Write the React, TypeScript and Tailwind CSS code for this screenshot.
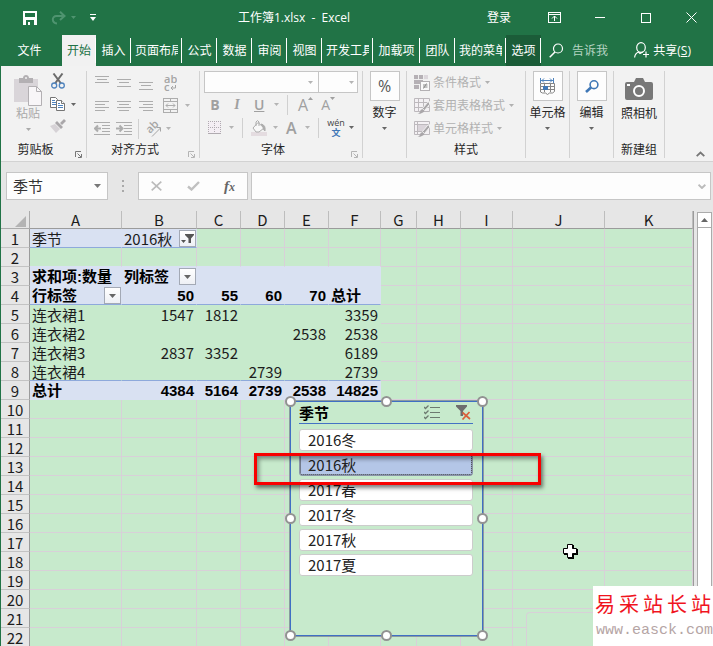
import React from "react";
import clsx from "clsx";

type IconProps = { className?: string };

const Caret = ({ className = "text-[#b4b4b4]" }: IconProps) => (
  <svg width="5" height="3" viewBox="0 0 5 3" className={clsx("shrink-0", className)}>
    <path d="M0 0h5L2.500 3z" fill="currentColor" />
  </svg>
);

const Divider = () => <span className="h-5 w-px bg-[#d0d0d0]" />;

const SaveIcon = () => (
  <svg width="14" height="14" viewBox="0 0 14 14" shapeRendering="crispEdges">
    <path d="M0 0h14v14H0z M2 2v4h10V2z M3 9v5h2v-3h2v3h4V9z" fill="#fff" fillRule="evenodd" />
  </svg>
);

const RedoIcon = () => (
  <svg width="15" height="14" viewBox="0 0 15 14" fill="none" stroke="#4f9470" strokeWidth="2">
    <path d="M13 5H5.500C.5 5 .5 12 6 12.500" />
    <path d="M9 .8 13.500 5 9 9" />
  </svg>
);

const CustomizeIcon = () => (
  <svg width="6" height="7" viewBox="0 0 6 7" fill="#fff">
    <path d="M0 0h6v1H0zM0 3h6L3 7z" />
  </svg>
);

const DisplayIcon = () => (
  <svg width="13" height="11" viewBox="0 0 13 11" fill="none" stroke="#fff" shapeRendering="crispEdges">
    <path d="M.5.5h12v10H.5zM1 2h11M6.500 4v5" />
    <path d="M4 6.500 6.500 4 9 6.500" shapeRendering="auto" />
  </svg>
);

const PasteIcon = () => (
  <svg width="28" height="31" viewBox="0 0 28 31">
    <path d="M0 4h24v23H0z" fill="#d9d5d9" />
    <path d="M5 3h4c0-4 6-4 6 0h4v5H5z" fill="#b3b0b3" />
    <circle cx="12" cy="3" r="1" fill="#f2f2f2" />
    <path d="M14.500 11.500h8l5 5v14h-13z" fill="#f8f6f8" stroke="#b3b0b3" />
    <path d="M22.500 11.500v5h5" fill="none" stroke="#b3b0b3" />
  </svg>
);

const CutIcon = () => (
  <svg width="14" height="16" viewBox="0 0 14 16" fill="none">
    <path d="M2.500.5 10 10.500M11.500.5 4 10.500" stroke="#6b6b6b" strokeWidth="2" />
    <circle cx="3.200" cy="12.500" r="2.500" stroke="#4f83bd" strokeWidth="1.300" />
    <circle cx="10.800" cy="12.500" r="2.500" stroke="#4f83bd" strokeWidth="1.300" />
  </svg>
);

const CopyIcon = () => (
  <svg width="15" height="14" viewBox="0 0 15 14" fill="#fff" stroke="#757575">
    <path d="M.5.500h5l2 2v8h-7z" />
    <path d="M2 3.500h3M2 5.500h4M2 7.500h4" stroke="#4f83bd" />
    <path d="M6.500 3.500h5l3 3v7h-8z" />
    <path d="M11.500 3.500v3h3" />
    <path d="M8 6.500h2M8 8.500h5M8 10.500h5" stroke="#4f83bd" />
  </svg>
);

const BrushIcon = () => (
  <svg width="16" height="14" viewBox="0 0 16 14">
    <path d="M0 7l5-2 5 5-4 4z" fill="#d6d2d6" />
    <path d="M5 4l2-2 6 6-2 2zM10 4l4-4 2 2-4 4z" fill="#aaa7aa" />
  </svg>
);

const AlignIcon = ({ d }: { d: string }) => (
  <svg width="14" height="14" viewBox="0 0 14 14" stroke="#adadad" shapeRendering="crispEdges">
    <path d={d} />
  </svg>
);

const WrapIcon = () => (
  <svg width="14" height="18" viewBox="0 0 14 18" fill="none" stroke="#a5a5a5">
    <text x="1" y="9" fontSize="11" fontWeight="600" fill="#a5a5a5" stroke="none">ab</text>
    <text x="1" y="17" fontSize="11" fontWeight="600" fill="#a5a5a5" stroke="none">c</text>
    <path d="M12.500 11v3H8M10 12l-2 2 2 2" />
  </svg>
);

const MergeIcon = () => (
  <svg width="15" height="15" viewBox="0 0 15 15" fill="none" stroke="#adadad" shapeRendering="crispEdges">
    <path d="M.5.500h14v14H.5zM0 3.500h15M0 11.500h15M7.500 0v3M7.500 12v3M3 7.500h9" />
    <path d="M5 5.500 3 7.500l2 2M10 5.500l2 2-2 2" shapeRendering="auto" />
  </svg>
);

const IndentIcon = ({ flip }: { flip?: boolean }) => (
  <svg width="16" height="13" viewBox="0 0 16 13" fill="none" stroke="#adadad">
    <path d="M0 .5h16M8 3.500h8M8 6.500h8M8 9.500h8M0 12.500h16" />
    <path d={flip ? "M0 6.500h6M3.500 3.500l3 3-3 3" : "M1 6.500h6M4 3.500l-3 3 3 3"} strokeWidth="2" />
  </svg>
);

const RotateIcon = () => (
  <svg width="17" height="16" viewBox="0 0 17 16" fill="none" stroke="#a5a5a5">
    <text x="0" y="0" fontSize="11" fontWeight="600" fill="#a5a5a5" stroke="none" transform="translate(5 13) rotate(-45)">ab</text>
    <path d="M7 15.500 15.500 7M11.500 6.500h4v4" />
  </svg>
);

const BorderIcon = () => (
  <svg width="13" height="13" viewBox="0 0 13 13" fill="none" stroke="#b0abb0" shapeRendering="crispEdges">
    <path d="M0 0h13v13H0z" fill="#f4eef4" stroke="none" />
    <path d="M.5 0v12M6.500 0v12M12.500 0v12M0 .5h13M0 6.500h13" strokeDasharray="1 1" />
    <path d="M0 12.500h13" />
  </svg>
);

const BucketIcon = () => (
  <svg width="16" height="16" viewBox="0 0 16 16" fill="none" stroke="#adadad">
    <path d="M0 12h16v4H0z" fill="#e4dce0" stroke="none" />
    <path d="M7 2.500 13 8l-5 4H5L2 8z" fill="#f8f8f8" />
    <path d="M5 6V2q1.500-3 3 0v4" />
    <path d="M10 4q5 1 4 7-2-1-2-4z" fill="#adadad" />
  </svg>
);

const ConditionalIcon = () => (
  <svg width="16" height="16" viewBox="0 0 16 16" fill="none" stroke="#b3b0b3" shapeRendering="crispEdges">
    <path d="M0 0h14v5H0zM0 5h9v4H0zM0 9h5v5H0z" fill="#b5b0b5" stroke="none" />
    <path d="M9 0h5v5H9z" fill="#dcd7dc" stroke="none" />
    <path d="M0 4.500h14M0 9.500h5M4.500 0v5M9.500 0v5" stroke="#eee" />
    <path d="M6.500 6.500h9v9h-9z" fill="#faf9fa" />
    <path d="M9 10h4.500M9 12h4.500M12.500 8.500l-3 5" stroke="#8c8c8c" shapeRendering="auto" />
  </svg>
);

const TableStyleIcon = ({ plain }: { plain?: boolean }) => (
  <svg width="16" height="16" viewBox="0 0 16 16" fill="none" stroke="#bdb9bd">
    <path d="M.5.500h15v13H.5z" fill="#f4f1f4" />
    {plain ? <path d="M4 4h9v6H4z" fill="#dad4da" stroke="none" /> : null}
    <path d={plain ? "M0 3.500h16M3.500 0v14M0 10.500h9" : "M0 4.500h16M0 9.500h16M4.500 0v14M9.500 0v14"} />
    <path d="M15.500 3.500v3l-5 6-2-2 5-6z" fill="#a9a6a9" stroke="#f2f2f2" />
    <path d="M8.500 11l2 2q-2 3-7 2.800 3-1 3-3.800z" fill="#a9a6a9" stroke="none" />
  </svg>
);

const CellsIcon = () => (
  <svg width="17" height="17" viewBox="0 0 17 17" fill="none" stroke="#858585">
    <path d="M2 2.500h12M1.500 0v5M14.500 0v5M5 .5l-2 2 2 2M11 .5l2 2-2 2" stroke="#4f83bd" />
    <path d="M1.500 5.500h14v8l-2 1.500h-3l-2 1.500-2-1.500h-3l-2-1zM1 8.500h15M1 11.500h15M5.500 5v9M11.500 5v9" />
    <path d="M4 8h5v4H4z" fill="#3f77b6" stroke="none" />
  </svg>
);

const FindIcon = ({ className }: IconProps) => (
  <svg width="14" height="13" viewBox="0 0 14 13" fill="none" stroke="currentColor" className={className}>
    <circle cx="9" cy="4.700" r="3.900" strokeWidth="1.600" />
    <path d="M6 7.500 1 12" strokeWidth="2.600" />
  </svg>
);

const CameraIcon = () => (
  <svg width="28" height="22" viewBox="0 0 28 22">
    <path d="M2 4h7l2-4h7l2 4h6q2 0 2 2v14q0 2-2 2H2q-2 0-2-2V6q0-2 2-2z" fill="#787878" />
    <circle cx="14" cy="13" r="5" fill="none" stroke="#fff" strokeWidth="2" />
    <path d="M2 6h3v2H2z" fill="#fff" />
  </svg>
);

const ShareIcon = () => (
  <svg width="15" height="17" viewBox="0 0 15 17" fill="none" stroke="#fff" strokeWidth="1.200">
    <ellipse cx="7" cy="5.500" rx="4.300" ry="4.800" />
    <path d="M.6 15.500Q1 11.500 4.500 10l1.500 1.500L9 10M12 9.500v6M9 12.500h6" />
  </svg>
);

const SearchIcon = () => (
  <svg width="15" height="15" viewBox="0 0 15 15" fill="none" stroke="#fff" strokeWidth="1.200">
    <circle cx="9" cy="5.500" r="4.500" />
    <path d="M6 9 .7 14.300" strokeWidth="1.500" />
  </svg>
);

const LauncherIcon = ({ className }: IconProps) => (
  <svg width="7" height="7" viewBox="0 0 7 7" fill="none" stroke="currentColor" className={className}>
    <path d="M.5 6V.500H6M6.500 3v3.500H3M2.500 2.500l3.500 3.500" />
  </svg>
);

const MultiSelectIcon = () => (
  <svg width="16" height="15" viewBox="0 0 16 15" fill="none" stroke="#6d7a70">
    <path d="M6 2.500h10M6 7.500h10M6 12.500h10" />
    <path d="M0 2l1.500 1.500L4.500.5M0 7l1.500 1.500 3-3M0 12l1.500 1.500 3-3" strokeWidth="1.300" />
  </svg>
);

const ClearFilterIcon = () => (
  <svg width="15" height="15" viewBox="0 0 15 15">
    <path d="M0 0h11v1.500L7 6v5H4.500V6L0 1.500z" fill="#6d6d6d" />
    <path d="M6.500 7.500 14 14M13.500 7l-7 7.500" stroke="#d9603b" strokeWidth="1.700" />
  </svg>
);

const FilterButton = ({ active, label }: { active?: boolean; label: string }) => (
  <button
    aria-label={label}
    className="flex size-[17px] shrink-0 items-center justify-center border border-[#a3a9b5] bg-linear-to-b from-white to-[#eef0f5]"
  >
    {active ? (
      <svg width="13" height="10" viewBox="0 0 13 10" fill="#555">
        <path d="M4 0h9v1L10 4.500V9H7.500V4.500L4 1zM0 6h5L2.500 9z" />
      </svg>
    ) : (
      <svg width="7" height="4" viewBox="0 0 7 4" fill="#666">
        <path d="M0 0h7L3.500 4z" />
      </svg>
    )}
  </button>
);

const tabs = [
  { name: "开始", style: "w-[34px] bg-[#f1f1f1] text-[#217346]" },
  { name: "插入", style: "w-[35px] px-[5px]" },
  { name: "页面布局", style: "w-[51px] px-1" },
  { name: "公式", style: "w-[35px] px-[5px]" },
  { name: "数据", style: "w-[35px] px-[5px]" },
  { name: "审阅", style: "w-[35px] px-[5px]" },
  { name: "视图", style: "w-[35px] px-[5px]" },
  { name: "开发工具", style: "w-[51px] px-1" },
  { name: "加载项", style: "w-[47px] px-[5px]" },
  { name: "团队", style: "w-[35px] px-[5px]" },
  { name: "我的菜单", style: "w-[51px] px-1" },
  { name: "选项", style: "w-[35px] px-1 bg-[#1b5c38]" },
];

const TitleBar = () => (
  <header className="flex h-[35px] items-center text-xs text-white">
    <div className="flex w-[108px] items-center pl-[22px]">
      <button aria-label="保存"><SaveIcon /></button>
      <button aria-label="重做" className="ml-3.5 flex items-center gap-[5px]">
        <RedoIcon />
        <Caret className="text-[#4f9470]" />
      </button>
      <button aria-label="自定义" className="ml-3.5"><CustomizeIcon /></button>
    </div>
    <h1 className="flex-1 text-center whitespace-pre">工作簿1.xlsx  -  Excel</h1>
    <button className="mr-3 w-10">登录</button>
    <button aria-label="功能区显示选项" className="flex w-[46px] justify-center"><DisplayIcon /></button>
    <button aria-label="最小化" className="flex w-[46px] justify-center">
      <span className="h-px w-2.5 bg-white" />
    </button>
    <button aria-label="最大化" className="flex w-[46px] justify-center">
      <span className="size-2.5 border border-white" />
    </button>
    <button aria-label="关闭" className="flex w-11 justify-center">
      <svg width="11" height="11" viewBox="0 0 11 11" stroke="#fff"><path d="M.5.500l10 10M10.500.5l-10 10" /></svg>
    </button>
  </header>
);

const TabBar = () => (
  <nav className="flex h-[31px] items-center text-xs text-white">
    <button className="h-full w-[61px] pr-1">文件</button>
    {tabs.map((tab) => (
      <button
        key={tab.name}
        className={clsx(
          "relative h-full shrink-0 after:absolute after:top-[3px] after:right-0 after:h-[25px] after:w-px after:bg-white",
          tab.style
        )}
      >
        <span className="block overflow-hidden whitespace-nowrap">{tab.name}</span>
      </button>
    ))}
    <label className="flex min-w-0 flex-1 items-center gap-2 pl-2">
      <SearchIcon />
      <input aria-label="告诉我" placeholder="告诉我" className="w-10 bg-transparent outline-none placeholder:text-[#b5d3c2]" />
    </label>
    <button className="flex shrink-0 items-center gap-1 pr-[22px]">
      <ShareIcon />
      <span>共享(<u>S</u>)</span>
    </button>
  </nav>
);

type GroupProps = {
  label?: string;
  width: string;
  launcher?: string;
  children: React.ReactNode;
};

const Group = ({ label, width, launcher, children }: GroupProps) => (
  <section className={clsx("relative flex h-[87px] shrink-0 flex-col border-r border-[#d2d2d2]", width)}>
    <div className="flex-1">{children}</div>
    {label ? <h2 className="pr-4 text-center leading-4 last:pr-0">{label}</h2> : null}
    {launcher ? (
      <button aria-label={label + "设置"} className={clsx("absolute right-1 bottom-0", launcher)}>
        <LauncherIcon />
      </button>
    ) : null}
  </section>
);

const BigButton = ({ label, children }: { label: string; children: React.ReactNode }) => (
  <button className="flex w-full flex-col items-center whitespace-nowrap">
    <span className="flex size-[30px] items-center justify-center border border-[#c6c6c6] bg-[#fdfdfd]">{children}</span>
    <span className="mt-1 leading-4">{label}</span>
    <Caret className="mt-1.5 text-[#666]" />
  </button>
);

const StyleButton = ({ label, children }: { label: string; children: React.ReactNode }) => (
  <button className="flex h-[23px] items-center gap-[3px] whitespace-nowrap">
    {children}
    <span>{label}</span>
    <Caret className="ml-px" />
  </button>
);

const Ribbon = () => (
  <div className="flex h-[96px] border-b border-[#d2d2d2] bg-[#f2f2f2] pt-[5px] text-xs text-[#262626]">
    <Group label="剪贴板" width="w-[86px]" launcher="text-[#777]">
      <div className="flex pl-[13px]">
        <button className="flex w-7 flex-col items-center pt-1 text-[#aaa]">
          <PasteIcon />
          <span className="leading-4 whitespace-nowrap">粘贴</span>
          <Caret className="mt-1.5" />
        </button>
        <div className="ml-2 flex flex-col items-start gap-2 pt-0.5">
          <button aria-label="剪切" className="px-px"><CutIcon /></button>
          <button aria-label="复制" className="flex items-center gap-1.5">
            <CopyIcon />
            <Caret className="text-[#666]" />
          </button>
          <button aria-label="格式刷"><BrushIcon /></button>
        </div>
      </div>
    </Group>
    <Group label="对齐方式" width="w-[113px]" launcher="text-[#b4b4b4]">
      <div className="flex h-[23px] items-center gap-2 pl-2">
        <button aria-label="顶端对齐"><AlignIcon d="M0 .5h14M2 3.500h10M0 6.500h14" /></button>
        <button aria-label="垂直居中"><AlignIcon d="M0 3.500h14M2 6.500h10M0 10.500h14" /></button>
        <button aria-label="底端对齐"><AlignIcon d="M0 6.500h14M2 9.500h10M0 13.500h14" /></button>
        <button aria-label="自动换行" className="ml-0.5"><WrapIcon /></button>
      </div>
      <div className="flex h-[23px] items-center gap-2 pl-2">
        <button aria-label="左对齐"><AlignIcon d="M0 2.500h14M0 5.500h10M0 8.500h14M0 11.500h10" /></button>
        <button aria-label="居中"><AlignIcon d="M0 2.500h14M2 5.500h10M0 8.500h14M2 11.500h10" /></button>
        <button aria-label="右对齐"><AlignIcon d="M0 2.500h14M4 5.500h10M0 8.500h14M4 11.500h10" /></button>
        <button aria-label="合并" className="ml-0.5 flex items-center gap-[7px]"><MergeIcon /><Caret /></button>
      </div>
      <div className="flex h-[23px] items-center gap-1.5 pl-[7px]">
        <button aria-label="减少缩进"><IndentIcon /></button>
        <button aria-label="增加缩进"><IndentIcon flip /></button>
        <Divider />
        <button aria-label="方向" className="flex items-center gap-1"><RotateIcon /><Caret /></button>
      </div>
    </Group>
    <Group label="字体" width="w-[163px]" launcher="text-[#b4b4b4]">
      <div className="flex pl-1">
        <label className="relative">
          <select aria-label="字体名称" className="h-[22px] w-[115px] appearance-none border border-[#c6c6c6] bg-[#fdfdfd]" />
          <Caret className="absolute top-2.5 right-1.5 text-[#b4b4b4]" />
        </label>
        <label className="relative -ml-px">
          <select aria-label="字号" className="h-[22px] w-10 appearance-none border border-[#c6c6c6] bg-[#fdfdfd]" />
          <Caret className="absolute top-2.5 right-1 text-[#b4b4b4]" />
        </label>
      </div>
      <div className="flex h-[23px] items-center pl-2.5 text-[#a0a0a0]">
        <button className="w-2.5 text-sm font-bold">B</button>
        <button className="ml-3 w-2.5 font-['Liberation_Serif',serif] text-sm font-bold italic">I</button>
        <button className="ml-3 w-2.5 text-sm font-semibold underline">U</button>
        <Caret className="mr-2 ml-2.5 text-[#b4b4b4]" />
        <Divider />
        <button aria-label="增大字号" className="ml-2.5 flex text-base">
          A<Caret className="mt-1 rotate-180" />
        </button>
        <button aria-label="减小字号" className="ml-2 flex text-sm">
          A<Caret className="mt-0.5" />
        </button>
      </div>
      <div className="flex h-[23px] items-center pl-2 text-[#a0a0a0]">
        <button aria-label="边框" className="flex items-center gap-2"><BorderIcon /><Caret /></button>
        <span className="mx-2 flex"><Divider /></span>
        <button aria-label="填充颜色" className="flex items-center gap-1.5"><BucketIcon /><Caret /></button>
        <button aria-label="字体颜色" className="ml-2 flex items-center gap-2 text-base font-semibold">A<Caret /></button>
        <span className="mx-2 flex"><Divider /></span>
        <button aria-label="拼音指南" className="flex items-center gap-1">
          <svg width="18" height="18" viewBox="0 0 18 18" textAnchor="middle" fontSize="9">
            <text x="9" y="7" fill="#444">wén</text>
            <text x="9" y="17" fill="#3f77b6" fontWeight="700">文</text>
          </svg>
          <Caret className="text-[#666]" />
        </button>
      </div>
    </Group>
    <Group width="w-[44px]">
      <BigButton label="数字"><span className="text-base text-[#555]">%</span></BigButton>
    </Group>
    <Group label="样式" width="w-[119px]">
      <div className="pl-[7px] text-[#b1b1b1]">
        <StyleButton label="条件格式"><ConditionalIcon /></StyleButton>
        <StyleButton label="套用表格格式"><TableStyleIcon /></StyleButton>
        <StyleButton label="单元格样式"><TableStyleIcon plain /></StyleButton>
      </div>
    </Group>
    <Group width="w-[44px]">
      <BigButton label="单元格"><CellsIcon /></BigButton>
    </Group>
    <Group width="w-[44px]">
      <BigButton label="编辑"><FindIcon className="text-[#3f77b6]" /></BigButton>
    </Group>
    <Group label="新建组" width="w-[51px]">
      <button className="flex w-full flex-col items-center gap-1.5 pt-[7px]">
        <CameraIcon />
        <span className="leading-4">照相机</span>
      </button>
    </Group>
    <div className="flex flex-1 items-end justify-end pr-2 pb-1">
      <button aria-label="折叠功能区">
        <svg width="9" height="6" viewBox="0 0 9 6" fill="none" stroke="#777" strokeWidth="1.800"><path d="M.7 5.200 4.500 1.500l3.800 3.700" /></svg>
      </button>
    </div>
  </div>
);

const FormulaBar = () => (
  <div className="flex h-12 items-center px-[5px] pr-0.5 text-[15px]">
    <div className="flex h-7 w-[102px] items-center border border-[#c6c6c6] bg-[#fdfdfd] pr-1.5 pl-1.5">
      <input aria-label="名称框" defaultValue="季节" className="w-full min-w-0 bg-transparent text-[#333] outline-none" />
      <svg width="7" height="4" viewBox="0 0 7 4" className="shrink-0" fill="#777"><path d="M0 0h7L3.500 4z" /></svg>
    </div>
    <div className="mx-3.5 flex flex-col gap-[3px]">
      <span className="size-0.5 bg-[#a9a9a9]" />
      <span className="size-0.5 bg-[#a9a9a9]" />
      <span className="size-0.5 bg-[#a9a9a9]" />
    </div>
    <div className="flex h-7 w-[110px] items-center justify-between border border-[#c6c6c6] bg-[#fdfdfd] px-3">
      <button aria-label="取消">
        <svg width="11" height="10" viewBox="0 0 11 10" stroke="#bbb" strokeWidth="1.700"><path d="M.7.700l9.600 8.600M10.300.7.700 9.300" /></svg>
      </button>
      <button aria-label="输入">
        <svg width="13" height="10" viewBox="0 0 13 10" fill="none" stroke="#c0c0c0" strokeWidth="2.400"><path d="M1 5.500 4.500 8.500 12 1" /></svg>
      </button>
      <button className="font-['Liberation_Serif',serif] font-bold italic text-[#666]">f<span className="text-xs">x</span></button>
    </div>
    <div className="ml-[3px] flex h-7 flex-1 items-center border border-[#c6c6c6] bg-[#fdfdfd] pr-1">
      <input aria-label="编辑栏" className="w-full bg-transparent outline-none" />
      <svg width="8" height="5" viewBox="0 0 8 5" fill="none" stroke="#bbb" strokeWidth="2"><path d="M.5.700 4 4 7.500.7" /></svg>
    </div>
  </div>
);

const columns = ["A", "B", "C", "D", "E", "F", "G", "H", "I", "J", "K"];
const columnWidths = [
  "w-[92px]", "w-[75px]", "w-11", "w-11", "w-11", "w-[52px]",
  "w-9", "w-11", "w-[52px]", "w-[92px]", "",
];

const sheet: Record<number, string[]> = {
  1: ["季节", "2016秋"],
  3: ["求和项:数量", "列标签"],
  4: ["行标签", "50", "55", "60", "70", "总计"],
  5: ["连衣裙1", "1547", "1812", "", "", "3359"],
  6: ["连衣裙2", "", "", "", "2538", "2538"],
  7: ["连衣裙3", "2837", "3352", "", "", "6189"],
  8: ["连衣裙4", "", "", "2739", "", "2739"],
  9: ["总计", "4384", "5164", "2739", "2538", "14825"],
};

const filters: Record<string, boolean> = { "1-1": true, "3-1": false, "4-0": false };

const boldCell = "bg-[#d9e1f2] font-['Liberation_Sans','Noto_Sans_CJK_SC',sans-serif] font-bold text-black";

const cellStyle = (row: number, col: number) => {
  if (row === 1 && col < 2) return "bg-[#d9e1f2] border-r-[#d9e1f2] border-b-[#8ea9db]";
  if (col > 5 || row < 2 || row > 9) return "border-[#d8d0d8]";
  if (row === 2) return "border-r-[#d8d0d8] border-b-[#d9e1f2]";
  if (row === 3) return clsx(boldCell, "border-[#d9e1f2]");
  if (row === 4) return clsx(boldCell, "border-r-[#d9e1f2] border-b-[#8ea9db]");
  if (row === 9) return clsx(boldCell, "border-[#d9e1f2]");
  if (row === 8) return "border-r-transparent border-b-[#8ea9db]";
  return "border-transparent";
};

const Grid = () => (
  <table className="w-full table-fixed border-separate border-spacing-0 text-[15px] leading-[17px] text-[#1c1c1c]">
    <colgroup>
      <col className="w-[29px]" />
      {columnWidths.map((w, i) => <col key={i} className={w} />)}
    </colgroup>
    <thead>
      <tr className="h-[18px] bg-[#e6e6e6]">
        <th className="border-r border-b border-[#ababab] p-0">
          <svg width="11" height="11" viewBox="0 0 11 11" className="mt-1 mr-[3px] ml-auto"><path d="M11 0v11H0z" fill="#b4b4b4" /></svg>
        </th>
        {columns.map((c) => (
          <th key={c} className="border-r border-b border-r-[#bdbdbd] border-b-[#9b9b9b] p-0 font-normal">{c}</th>
        ))}
      </tr>
    </thead>
    <tbody>
      {Array.from({ length: 22 }, (_, i) => i + 1).map((row) => (
        <tr key={row} className="h-[19px]">
          <th className="border-r border-b border-r-[#9b9b9b] border-b-[#c3c3c3] bg-[#e6e6e6] p-0 pt-px font-normal">{row}</th>
          {columns.map((c, col) => {
            const text = sheet[row]?.[col] ?? "";
            const key = row + "-" + col;
            return (
              <td key={c} className={clsx("border-r border-b p-0 whitespace-nowrap", cellStyle(row, col))}>
                <div className={clsx("flex h-[18px] items-end", /^\d+$/.test(text) ? "justify-end pr-0.5" : "justify-between pl-0.5")}>
                  <span>{text}</span>
                  {key in filters ? <FilterButton active={filters[key]} label={text + "筛选"} /> : null}
                </div>
              </td>
            );
          })}
        </tr>
      ))}
    </tbody>
  </table>
);

const seasons = ["2016冬", "2016秋", "2017春", "2017冬", "2017秋", "2017夏"];

const handles = [
  "-top-1.5 -left-1.5", "-top-1.5 left-[90px]", "-top-1.5 -right-1.5",
  "top-[111px] -left-1.5", "top-[111px] -right-1.5",
  "-bottom-1.5 -left-1.5", "-bottom-1.5 left-[90px]", "-bottom-1.5 -right-1.5",
];

const Slicer = () => (
  <aside className="absolute top-[191px] left-[289px] h-[235px] w-[193px] border border-[#3f6fc4] bg-[#c7eacc] pr-[9px] pl-2 text-[15px] text-[#222] shadow-[0_0_0_1px_#8b9ba0]">
    <div className="flex h-[22px] items-center border-b border-[#4472c4]">
      <h2 className="flex-1 leading-5 font-bold text-black">季节</h2>
      <button aria-label="多选" className="mr-4"><MultiSelectIcon /></button>
      <button aria-label="清除筛选器" className="mr-0.5"><ClearFilterIcon /></button>
    </div>
    <div className="mt-[5px] flex flex-col gap-[3px]">
      {seasons.map((s) => (
        <button
          key={s}
          className={clsx(
            "h-[22px] rounded-[3px] border px-2 text-left leading-[18px]",
            s === "2016秋"
              ? "border-[#8a94a8] bg-[#b4c6e7] outline-1 -outline-offset-2 outline-dotted outline-[#333]"
              : "border-[#ccc] bg-white"
          )}
        >
          {s}
        </button>
      ))}
    </div>
    {handles.map((h) => (
      <span key={h} className={clsx("absolute size-[11px] rounded-full border-2 border-[#929292] bg-white", h)} />
    ))}
  </aside>
);

const App = () => {
  return (
    <div className="flex h-screen min-w-[700px] flex-col overflow-hidden border-l border-[#217346] bg-[#e6e6e6] font-['Open_Sans','Noto_Sans_CJK_SC',sans-serif]">
      <div className="bg-[#217346]">
        <TitleBar />
        <TabBar />
      </div>
      <Ribbon />
      <FormulaBar />

      <main className="relative flex min-h-0 flex-1 pt-px font-['Noto_Sans_CJK_SC',sans-serif]">
        <div className="min-w-0 flex-1 self-start border-r border-[#9b9b9b] bg-[#c7eacc]">
          <Grid />
        </div>
        <div className="mx-[3px] mt-px mr-px flex w-[15px] flex-col border-x border-[#ababab] bg-white">
          <button aria-label="向上滚动" className="flex h-4 items-center justify-center border-y border-[#ababab]">
            <svg width="7" height="4" viewBox="0 0 7 4" fill="#666"><path d="M0 4h7L3.500 0z" /></svg>
          </button>
        </div>

        <Slicer />

        {/* Callout around the selected season */}
        <div className="absolute top-[243px] left-[253px] h-8 w-[287px] border-3 border-[#f80000] shadow-[2px_3px_4px_rgba(0,0,0,0.5),inset_2px_3px_4px_rgba(0,0,0,0.4)]" />

        {/* Cell pointer */}
        <svg width="15" height="15" viewBox="0 0 15 15" className="absolute top-[334px] left-[562px]">
          <path d="M5 1h6v4h4v6h-4v4H5v-4H1V5h4z" fill="#000" />
          <path d="M4.500.5h5v4h4v5h-4v4h-5v-4h-4v-5h4z" fill="#fff" stroke="#000" />
        </svg>

        <div className="absolute right-[120px] bottom-0 h-[34px] w-[67px] rounded-tl-sm border-t border-l border-[#d8d0d8] bg-[#c7eacc]" />

        {/* Site mark */}
        <div className="absolute right-0 bottom-0 h-[60px] w-[120px] bg-white">
          <div className="flex h-9 items-center justify-between px-0.5 text-[20px] text-[#f0141e]">
            <span>易</span><span>采</span><span>站</span><span>长</span><span>站</span>
          </div>
          <p className="pl-[3px] font-['Liberation_Mono',monospace] text-[15px] leading-[18px] text-[#b5a5a5]">www.easck.com</p>
        </div>
      </main>
    </div>
  );
};

export default App;
